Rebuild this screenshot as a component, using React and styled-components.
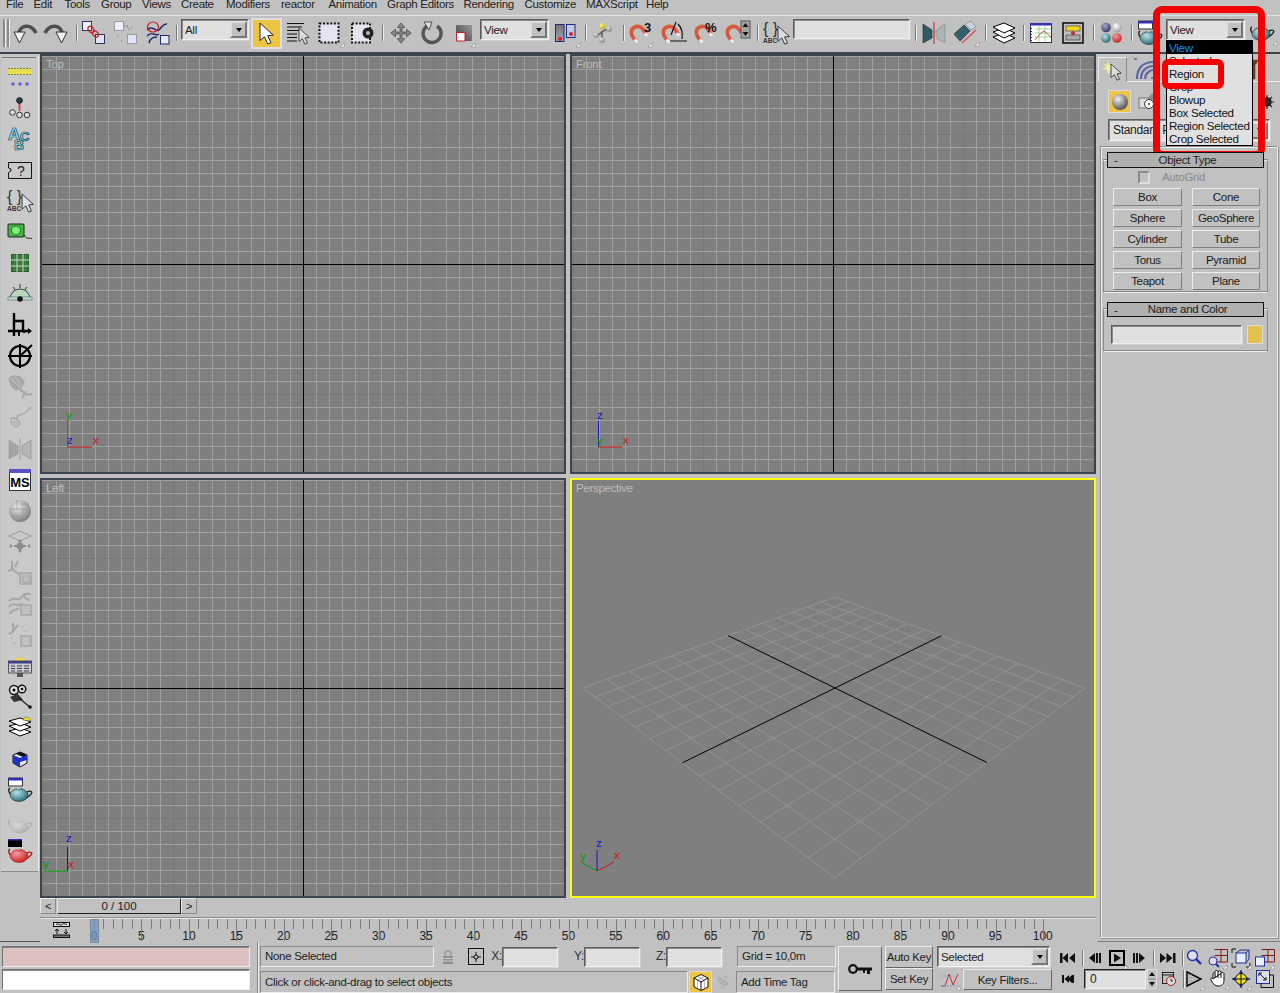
import React from 'react';
import styled, { createGlobalStyle, css } from 'styled-components';

const Global = createGlobalStyle`
  html, body { margin: 0; padding: 0; background: #c1c1c1; overflow: hidden; }
  * { box-sizing: border-box; }
`;
const FONT = `"Liberation Sans", Arial, sans-serif`;
const sunken = css`
  background: #e0e0e0;
  border: 1px solid;
  border-color: #5c5c5c #f0f0f0 #f0f0f0 #5c5c5c;
  box-shadow: inset 1px 1px 0 #8a8a8a, 1px 1px 0 #d0d0d0;
`;
const raised = css`
  background: #c1c1c1;
  border: 1px solid;
  border-color: #ececec #808080 #808080 #ececec;
`;

const Root = styled.div`
  position: relative; width: 1280px; height: 993px; overflow: hidden;
  background: #c1c1c1; font: 11.5px/13px ${FONT}; letter-spacing: -.3px; color: #1c1c1c;
`;
const Menu = styled.nav`
  display: flex; height: 15px; overflow: hidden; padding-left: 6px; line-height: 9px; color: #222;
  font-size: 11.5px;
`;
const MenuItem = styled.span`flex: none; width: ${p => p.$w}px;`;
const Toolbar = styled.div`
  display: flex; align-items: center; height: 39px; padding-bottom: 2px;
  border-top: 1px solid #e2e2e2; border-bottom: 2px solid #3c4450;
`;
const Grip = styled.div`
  flex: none; width: 10px; height: 28px; display: flex; gap: 1px; padding-left: 3px;
  &::before, &::after { content: ''; width: 2px; background: #8c8c8c; border-right: 1px solid #eee; }
`;
const Slot = styled.div`
  flex: none; width: ${p => p.$w}px; display: flex; align-items: center; justify-content: center;
  margin-left: ${p => p.$ml || 0}px;
`;
const Sep = styled.div`
  flex: none; width: ${p => p.$w}px; display: flex; justify-content: center;
  &::before { content: ''; width: 1px; height: ${p => p.$h || 16}px; background: #777; box-shadow: 1px 0 0 #eee; }
`;
const Glyph = styled.svg`display: block; flex: none; overflow: visible; letter-spacing: 0;`;
const Combo = styled.div`
  ${sunken}; flex: none; width: ${p => p.$w}px; height: ${p => p.$h || 21}px; margin-left: ${p => p.$ml || 0}px;
  display: flex; align-items: center; justify-content: space-between; padding: 0 1px 0 3px;
  font-size: 11.5px; white-space: nowrap; overflow: hidden;
  & > span:first-child { padding-top: 1px; }
`;
const ToolCombo = styled(Combo)`align-self: flex-start; margin-top: 3px;`;
const ComboBtn = styled.span`
  ${raised}; flex: none; width: 17px; height: 17px; display: flex; align-items: center; justify-content: center;
  border-width: 2px; border-color: #ddd #777 #777 #ddd;
  &::after { content: ''; border: 3.5px solid transparent; border-top: 4px solid #000; border-bottom: 0; }
`;
const SelectBtn = styled.div`
  flex: none; width: 31px; height: 31px; margin-left: 2px; display: flex; align-items: center; justify-content: center;
  background: #eec445; border: 2px solid #dedede;
`;
const BlankInput = styled.div`${sunken}; flex: none; align-self: flex-start; width: 117px; height: 20px; margin: 3px -1px 0 3px;`;

const Work = styled.div`display: flex; height: 888px;`;
const LeftCol = styled.aside`flex: none; width: 40px; height: 100%; border-bottom: 1px solid #555; padding-top: 2px;`;
const Side = styled.div`
  width: 38px; height: 816px; margin-left: 1px; background: #c9c9c9; border-right: 1px solid #eee;
  border-bottom: 1px solid #8a8a8a; padding-top: 8px; display: flex; flex-direction: column;
  position: relative;
  &::before { content: ''; position: absolute; left: 1px; right: 2px; top: 1px; height: 1px; background: #777; }
`;
const SideSlot = styled.div`flex: none; height: ${p => p.$h}px; display: flex; align-items: center; justify-content: center;`;
const Center = styled.main`flex: none; width: 1058px;`;
const Views = styled.div`display: grid; grid-template-columns: 526px 526px; grid-template-rows: 420px 420px; gap: 4px; height: 844px;`;
const View = styled.section`
  position: relative; background: #7f7f7f; border: 2px solid ${p => p.$active ? '#ffff00' : '#3c4450'};
  overflow: hidden;
`;
const ViewLabel = styled.span`position: absolute; left: 4px; top: 2px; color: #bcbcbc; font-size: 11.5px;`;
const Slider = styled.div`display: flex; height: 19px; width: 156px; align-items: flex-start;`;
const SliderBtn = styled.div`
  ${raised}; flex: none; width: 16px; height: 16px; display: flex; align-items: center; justify-content: center;
  font-size: 11px; border-color: #e8e8e8 #8a8a8a #8a8a8a #e8e8e8;
`;
const SliderThumb = styled.div`
  flex: none; width: 124px; height: 16px; margin-left: 1px; text-align: center; font-size: 11.5px; line-height: 15px; letter-spacing: 0;
  border: 1px solid; border-color: #e8e8e8 #222 #222 #e8e8e8;
`;
const Ruler = styled.div`
  position: relative; height: 25px; display: flex; align-items: flex-end; border-top: 1px solid #8c8c8c;
  box-shadow: inset 0 1px 0 #e6e6e6; width: 1056px;
`;
const RulerIcon = styled.div`flex: none; margin: 0 0 4px 13px; width: 17px; align-self: flex-end; height: 16px;`;
const RulerLabels = styled.div`display: flex; margin: 0 0 -1px .3px;`;
const RulerLabel = styled.span`flex: none; width: 47.45px; text-align: center; font-size: 12px; line-height: 14px; letter-spacing: 0; color: #222;`;
const Ticks = styled.svg`position: absolute; left: 0; top: 0; overflow: visible;`;

const Panel = styled.aside`flex: none; width: 182px; height: 888px; display: flex; flex-direction: column; border-bottom: 1px solid #7c7c7c;`;
const Tabs = styled.div`display: flex; height: 28px; padding-top: 3px; border-bottom: 1px solid #eee;`;
const Tab = styled.div`
  flex: none; width: ${p => p.$w}px; height: ${p => p.$active ? 25 : 24}px; display: flex; align-items: center; justify-content: center;
  margin-left: ${p => p.$ml || 0}px;
  ${p => p.$active && css`border: 1px solid; border-color: #eee #8a8a8a #c1c1c1 #eee;`}
`;
const SubTabs = styled.div`display: flex; align-items: center; height: 23px; margin: 8px 0 0 10px;`;
const SubActive = styled.div`flex: none; width: 23px; height: 23px; background: #eec445; border: 1px solid #ddd; display: flex; align-items: center; justify-content: center;`;
const SubEnd = styled.div`margin-left: auto; margin-right: 6px;`;
const PanelCombo = styled(Combo)`margin: 6px 0 0 10px; padding-left: 4px; font-size: 12px;`;
const Frame = styled.div`
  flex: none; margin: 5px 2px 4px 2px; height: 792px; border: 1px solid; border-color: #8e8e8e #ececec #ececec #8e8e8e;
  box-shadow: 1px 1px 0 #8e8e8e, inset 1px 1px 0 #eee; padding: 5px 0 0 2px;
`;
const Rollout = styled.div`width: 165px; margin-bottom: 9px;`;
const RollHead = styled.div`
  position: relative; z-index: 1; margin: 0 4px; height: ${p => p.$h}px; background: #b0b0b0; border: 1px solid #111;
  display: flex; align-items: center; justify-content: center; font-size: 11.5px; padding-left: 4px;
  & > i { position: absolute; left: 6px; top: 1px; font-style: normal; }
`;
const RollBody = styled.div`
  margin-top: -8px; border: 1px solid; border-color: #eee #888 #eee #888; box-shadow: inset 0 -1px 0 #888, 0 -1px 0 #888; padding: ${p => p.$pt}px 5px 0 9px;
  height: ${p => p.$h}px;
`;
const AutoGridRow = styled.div`display: flex; align-items: center; height: 13px; margin-left: 25px; color: #8a8a8a; font-size: 11.5px; gap: 12px;`;
const Check = styled.span`flex: none; width: 12px; height: 13px; border: 2px solid; border-color: #8a8a8a #ddd #ddd #8a8a8a; background: #c1c1c1;`;
const PrimGrid = styled.div`display: grid; grid-template-columns: 69px 68px; column-gap: 10px; row-gap: 3px; margin-top: 4px;`;
const PrimBtn = styled.div`
  height: 18px; border: 1px solid; border-color: #ececec #808080 #808080 #ececec; font-size: 11.5px;
  display: flex; align-items: center; justify-content: center; white-space: nowrap; color: #1a1a1a;
`;
const NameRow = styled.div`display: flex; gap: 5px; margin-left: -2px;`;
const NameInput = styled.div`${sunken}; flex: none; width: 131px; height: 19px;`;
const Swatch = styled.div`flex: none; width: 16px; height: 19px; background: #e3c050; border: 1px solid #ddd;`;

const Status = styled.footer`display: flex; height: 51px;`;
const Prompt = styled.div`flex: none; width: 248px; margin: 4px 0 0 2px; display: flex; flex-direction: column; gap: 2px;`;
const PromptBox = styled.div`
  height: 21px; background: ${p => p.$c}; border: 1px solid; border-color: #707070 #eee #eee #707070; box-shadow: inset 0 1px 0 #888;
`;
const Divider = styled.div`flex: none; width: 1px; margin-left: 7px; margin-right: 2px; background: #888; box-shadow: 1px 0 0 #eee;`;
const StatusMid = styled.div`flex: none; width: 576px; margin-left: 0; padding-top: 4px; display: flex; flex-direction: column; gap: 4px;`;
const StatusRow = styled.div`display: flex; height: ${p => p.$h}px; align-items: center;`;
const TextBox = styled.div`
  flex: none; width: ${p => p.$w}px; height: 100%; padding-left: 4px; display: flex; align-items: center; margin-left: ${p => p.$ml || 0}px;
  border: 1px solid; border-color: #8a8a8a #eee #eee #8a8a8a; font-size: 11.5px; color: #222; white-space: nowrap;
`;
const AxisLabel = styled.span`flex: none; width: ${p => p.$w}px; text-align: right; font-size: 12px; color: #333;`;
const CoordInput = styled.div`${sunken}; flex: none; width: 56px; height: 20px;`;
const AbsBtn = styled.div`flex: none; width: 16px; height: 17px; margin-left: 6px; border: 1px solid #111; display: flex; align-items: center; justify-content: center;`;
const CubeBtn = styled.div`flex: none; width: 23px; height: 22px; margin-left: 1px; background: #eec445; border: 1px solid #ddd; display: flex; align-items: center; justify-content: center;`;
const KeyBtn = styled.div`${raised}; flex: none; width: 44px; height: 45px; margin: 4px 0 0 2px; display: flex; align-items: center; justify-content: center; border-color: #ececec #666 #666 #ececec;`;
const KeyCol = styled.div`flex: none; width: 48px; margin: 4px 0 0 3px; display: flex; flex-direction: column;`;
const KeyCell = styled.div`${raised}; height: 22px; display: flex; align-items: center; justify-content: center; font-size: 11.5px; white-space: nowrap; border-color: #ececec #666 #666 #ececec;`;
const SetCol = styled.div`flex: none; width: 115px; margin: 4px 0 0 4px; display: flex; flex-direction: column; gap: 2px;`;
const SetRow = styled.div`display: flex; height: 21px; align-items: center;`;
const KeyFilters = styled.div`${raised}; flex: none; width: 89px; height: 21px; padding-top: 1px; display: flex; align-items: center; justify-content: center; font-size: 11.5px; border-color: #ececec #666 #666 #ececec;`;
const Play = styled.div`flex: none; padding-top: 5px; display: flex; flex-direction: column; margin-left: 4px;`;
const PlayRow = styled.div`display: flex; align-items: center; height: 21px;`;
const FrameInput = styled.div`${sunken}; flex: none; width: 62px; height: 20px; padding-left: 5px; font-size: 12px; line-height: 18px; border-color: #222 #eee #eee #222;`;
const Spin = styled.div`flex: none; width: 10px; height: 20px; margin-left: 1px;`;

const ListMenu = styled.ul`
  position: absolute; left: 1166px; top: 40px; width: 87px; height: 106px; margin: 0; padding: 0; list-style: none;
  background: #e0e0e0; border: 1px solid #000; font-size: 11.6px; line-height: 13px; color: #111; white-space: nowrap;
`;
const ListItem = styled.li`
  height: 13px; padding-left: 2px; line-height: 13px;
  ${p => p.$on && css`background: #000; color: #0a9cf5;`}
`;
const HeavyFrame = styled.div`
  position: absolute; left: 1153px; top: 6px; width: 112px; height: 152px; border: 7px solid #f40000; border-radius: 9px;
`;
const LightFrame = styled.div`
  position: absolute; left: 1162px; top: 59px; width: 62px; height: 30px; border: 6px solid #f40000; border-radius: 6px;
`;
const ZeroDefs = styled.svg`display: block; width: 0; height: 0;`;

/* drawing helpers */
const I = ({ w = 24, h = 24, children }) => <Glyph width={w} height={h} viewBox={`0 0 ${w} ${h}`}>{children}</Glyph>;
const Fly = ({ x, y }) => <path d={`M${x} ${y}h4v-4z`} fill="#fff" stroke="#555" strokeWidth=".4" />;
const Arrow = ({ x = 0, y = 0, s = 1, fill = '#fff', stroke = '#222' }) => (
  <path transform={`translate(${x} ${y}) scale(${s})`} d="M0 0V16L4 12.5 7 19 10 18 7 11.5 12 11Z" fill={fill} stroke={stroke} strokeWidth=".9" />
);
const Ball = ({ x, y, r, g = 'bGray' }) => <circle cx={x} cy={y} r={r} fill={`url(#${g})`} />;
const Magnet = ({ x = 0, y = 0 }) => (
  <g transform={`translate(${x} ${y})`}>
    <path d="M7 17C1 11 1 5 6 3S14 4 17 10" fill="none" stroke="#d9593b" strokeWidth="3.8" />
    <path d="M5.500 15.500L8.500 18.500M15.500 9.500L18.500 11.500" stroke="#eee" strokeWidth="3" />
  </g>
);
const Pot = ({ g = 'bTeal', x = 0, y = 0, gray, line = '#222' }) => (
  <g transform={`translate(${x} ${y})`}>
    <path d="M4 8C0 6 0 2 2 1M19 5C23 3 25 5 23 7 22 9 20 10 18 11" fill="none" stroke={gray ? '#b0b0b0' : line} strokeWidth="1.4" />
    <ellipse cx="11" cy="8" rx="9" ry="6.5" fill={`url(#${g})`} stroke={gray ? 'none' : line} strokeWidth=".6" />
    <ellipse cx="11" cy="2" rx="2.5" ry="1.3" fill={`url(#${g})`} />
  </g>
);
const Undo = ({ flip }) => (
  <I w={24} h={22}><g transform={flip ? 'translate(24 0) scale(-1 1)' : undefined}>
    <path d="M6 11C7 3 18 1 23 11" fill="none" stroke="#4c4c4c" strokeWidth="3.6" />
    <path d="M1 10H12L6.5 21Z" fill="#f2f2f2" stroke="#333" />
  </g></I>
);
const Link = ({ gray }) => {
  const a = gray ? '#9a9a9a' : '#2b3560', r = gray ? '#b86060' : '#d02020';
  return <I w={24} h={24}>
    <rect x=".5" y=".5" width="9" height="9" fill="#eef" stroke={a} />
    <rect x="13.5" y="13.5" width="9" height="9" fill="#dfe4f2" stroke={a} />
    {gray ? <path d="M10 5c4 0 5 2 5 5M3 14l1 1M7 19l1 1M13 4l1 1M17 7l1 0" stroke={r} fill="none" strokeDasharray="1.4 1.4" />
      : <g fill="none" stroke={r} strokeWidth="1.3"><ellipse cx="9" cy="8.5" rx="2.5" ry="3.5" transform="rotate(-40 9 8.5)" /><ellipse cx="13.5" cy="13" rx="2.5" ry="3.5" transform="rotate(-40 13.5 13)" /></g>}
  </I>;
};
const Bind = ({ gray }) => {
  const c = gray ? '#9c9c9c' : '#1c2a70';
  return <I w={24} h={24}>
    <path d="M1 9C7 3 10 12 13 9S17 2 21 3M1 15C6 9 9 16 13 13M3 22c1-5 5-6 8-6" fill="none" stroke={c} strokeWidth="1.5" />
    <ellipse cx="7" cy="6" rx="5.5" ry="5" fill="none" stroke={gray ? '#aaa' : '#d02020'} strokeWidth="1.2" />
    <rect x="14.5" y="14.5" width="8.5" height="8.5" fill="#e4e8f4" stroke={c} />
  </I>;
};
const Mirror = ({ gray }) => <I w={22} h={22}>
  <path d="M0 2L9 8V16L0 21Z" fill={gray ? '#a4a4a4' : '#2f5a68'} stroke={gray ? '#999' : '#222'} strokeWidth=".6" />
  <path d="M22 2L13 8V16L22 21Z" fill={gray ? '#b6b6b6' : '#a8b4b8'} stroke="#888" strokeWidth=".6" />
  <path d="M11 0V22" stroke={gray ? '#aaa' : '#c84848'} strokeWidth="1.4" />
</I>;
const Layers = () => <I w={22} h={22}>
  {[13, 8, 3].map(y => <path key={y} d={`M0 ${y + 2}L11 ${y - 2}L22 ${y + 3}L11 ${y + 8}Z`} fill="#fff" stroke="#000" />)}
</I>;
const NamedSel = () => <I w={26} h={24}>
  <text x="0" y="13" fontFamily={FONT} fontSize="16" fill="#333">{'{ }'}</text>
  <text x="0" y="22" fontFamily={FONT} fontSize="6.5" fontWeight="700" fill="#333">ABC</text>
  <Arrow x={15} y={5} s={.95} fill="#ddd" />
</I>;

const ToolRow = () => <>
  <Grip />
  <Slot $w={30}><Undo /></Slot>
  <Slot $w={32}><Undo flip /></Slot>
  <Sep $w={8} />
  <Slot $w={28}><Link /></Slot>
  <Slot $w={36}><Link gray /></Slot>
  <Slot $w={28}><Bind /></Slot>
  <Sep $w={9} />
  <ToolCombo $w={68}><span>All</span><ComboBtn /></ToolCombo>
  <SelectBtn><I w={14} h={22}><Arrow y={1} s={1.1} fill="#fff" /></I></SelectBtn>
  <Slot $w={31}><I w={22} h={22}>
    <path d="M0 1.5H17M0 5H15M0 8.5H13M0 12H10M0 15.5H10M0 19H10" stroke="#111" strokeWidth="1.2" />
    <Arrow x={12} y={6} s={.85} fill="#ddd" />
  </I></Slot>
  <Slot $w={34}><I w={24} h={22}>
    <rect x="1.5" y="1.5" width="19" height="19" fill="#e4e4f0" stroke="#111" strokeWidth="2" strokeDasharray="2 1.6" />
    <Fly x={22} y={25} />
  </I></Slot>
  <Slot $w={31}><I w={24} h={22}>
    <rect x="1" y="1.5" width="18" height="19" fill="#e4e4f0" stroke="#111" strokeWidth="2" strokeDasharray="2 1.6" />
    <circle cx="17" cy="11" r="5.5" fill="#222" /><circle cx="17" cy="11" r="2" fill="#bbb" />
  </I></Slot>
  <Sep $w={8} />
  <Slot $w={29}><I w={22} h={22}><path transform="scale(.92)" d="M12 1l4 5h-3v5h5V8l5 4-5 4v-3h-5v5h3l-4 5-4-5h3v-5H6v3l-5-4 5-4v3h5V6H8z" fill="#8a8a8a" stroke="#444" strokeWidth=".8" /></I></Slot>
  <Slot $w={34}><I w={22} h={22}>
    <path d="M16 4A9 9 0 1 1 7 3.500" fill="none" stroke="#555" strokeWidth="3.4" />
    <path d="M3 0L11 0 8 8Z" fill="#ddd" stroke="#333" strokeWidth=".8" />
  </I></Slot>
  <Slot $w={29}><I w={20} h={20}>
    <rect x="2" y="2" width="16" height="16" fill="url(#gDark)" />
    <rect x="2.500" y="9.500" width="8.500" height="8.500" fill="#fff" stroke="#c82020" />
    <Fly x={17} y={24} />
  </I></Slot>
  <ToolCombo $w={69} $ml={2}><span>View</span><ComboBtn /></ToolCombo>
  <Slot $w={34}><I w={22} h={22}>
    <rect x=".5" y="2.500" width="8.500" height="17" fill="url(#gSlate)" stroke="#1c2a80" />
    <rect x="11.500" y="2.500" width="8.500" height="13" fill="#c4c8dc" stroke="#1c2a80" />
    <circle cx="5" cy="17" r="2" fill="#e02020" /><circle cx="16" cy="12" r="2" fill="#e02020" />
    <Fly x={21} y={25} />
  </I></Slot>
  <Sep $w={5} />
  <Slot $w={30}><I w={20} h={20}>
    <path d="M4 13L10 8 16 5M9 8L9 18" stroke="#555" strokeWidth="1.4" fill="none" />
    <Ball x={9} y={3} r={3} g="bYellow" /><Ball x={16} y={6} r={2.800} /><Ball x={3} y={12} r={2.800} /><Ball x={9} y={17} r={2.800} />
  </I></Slot>
  <Sep $w={10} />
  <Slot $w={26}><I w={24} h={24}><Magnet y={3} />
    <text x="15" y="11" fontFamily={FONT} fontSize="13" fontWeight="700" fill="#111">3</text><Fly x={19} y={26} /></I></Slot>
  <Slot $w={40}><I w={26} h={24}><Magnet y={3} />
    <path d="M15 1L10 14M9 20H26M17 3C21 7 22 12 21 18" stroke="#111" fill="none" strokeWidth="1.2" /></I></Slot>
  <Slot $w={24}><I w={24} h={24}><Magnet y={3} />
    <text x="11" y="11" fontFamily={FONT} fontSize="13" fontWeight="700" fill="#111">%</text></I></Slot>
  <Slot $w={28} $ml={6}><I w={24} h={24}><Magnet y={3} x={-1} />
    <rect x="15" y="0" width="9" height="17" fill="#a4a4a4" stroke="#555" />
    <path d="M19.500 2l3 4h-6zM19.500 15l3-4h-6z" fill="#111" /></I></Slot>
  <Sep $w={10} />
  <Slot $w={28}><NamedSel /></Slot>
  <BlankInput />
  <Sep $w={12} />
  <Slot $w={26}><Mirror /></Slot>
  <Slot $w={36}><I w={24} h={24}>
    <path d="M1 13L11 4 17 10 7 20Z" fill="#34606c" stroke="#222" strokeWidth=".6" />
    <path d="M12 3L18 0 23 6 18 9Z" fill="#c8d4dc" stroke="#777" strokeWidth=".6" />
    <path d="M9 22L23 9" stroke="#d85050" strokeWidth="1.4" />
    <Fly x={22} y={25} />
  </I></Slot>
  <Sep $w={5} />
  <Slot $w={32}><Layers /></Slot>
  <Sep $w={6} />
  <Slot $w={30}><I w={22} h={20}>
    <rect x=".5" y=".5" width="21" height="19" fill="#fff" stroke="#333" />
    <rect x="0" y="0" width="22" height="2.500" fill="#3434b4" />
    <path d="M5 6H21M5 10H21M5 14H21M9 3V19M15 3V19" stroke="#8c8" strokeWidth=".8" />
    <path d="M1 5v1M1 8v1M1 11v1M1 14v1M1 17v1" stroke="#22a" strokeWidth="2" />
    <path d="M5 17L10 11 14 8 21 14" fill="none" stroke="#d05050" />
  </I></Slot>
  <Slot $w={34}><I w={22} h={22}>
    <rect x="1" y="1" width="20" height="20" fill="none" stroke="#111" strokeWidth="1.6" />
    <rect x="4" y="4" width="14" height="5" fill="#f4d820" stroke="#333" strokeWidth=".6" />
    <rect x="4" y="13" width="14" height="5" fill="#aaa" stroke="#333" strokeWidth=".6" />
    <path d="M11 9v3M9 10.500l2 2 2-2" stroke="#c02020" fill="none" strokeWidth="1.4" />
  </I></Slot>
  <Sep $w={6} />
  <Slot $w={32}><I w={22} h={22}>
    <Ball x={5} y={5.500} r={4.800} g="bNavy" /><Ball x={16} y={5.500} r={4.800} g="bWhite" />
    <Ball x={5} y={16} r={4.800} g="bTeal" /><Ball x={16} y={16} r={4.800} g="bRed" />
  </I></Slot>
  <Sep $w={7} />
  <Slot $w={30}><I w={24} h={24}>
    <rect x="0.500" y="0" width="14" height="8" fill="#fff" stroke="#333" /><rect x="0" y="0" width="15" height="2.500" fill="#3030b0" />
    <Pot y={9} />
  </I></Slot>
  <ToolCombo $w={79} $ml={1}><span>View</span><ComboBtn /></ToolCombo>
  <Slot $w={34}><I w={24} h={18}><Pot y={2} /><Fly x={23} y={21} /></I></Slot>
</>;

const ruled = (n, f) => Array.from({ length: n }, (_, i) => f(i));
const Tripod = ({ kind }) => {
  const B = '#1414c8', G = '#00a000', R = '#d01414';
  const T = (x, y, c, t) => <text x={x} y={y} fill={c} fontFamily={FONT} fontSize="11.5">{t}</text>;
  if (kind === 'top') return <g strokeWidth="1">
    <path d="M25.500 391V365" stroke={G} /><path d="M25.500 391H50" stroke={R} />
    {T(24, 363, G, 'y')}{T(25, 388, B, 'z')}{T(51, 388, R, 'x')}</g>;
  if (kind === 'front') return <g strokeWidth="1">
    <path d="M26.500 391V365" stroke={B} /><path d="M26.500 391H50" stroke={R} />
    {T(25, 363, B, 'z')}{T(25, 388, G, 'y')}{T(51, 388, R, 'x')}</g>;
  if (kind === 'left') return <g strokeWidth="1">
    <path d="M25.500 391V367" stroke={B} /><path d="M25.500 391H2" stroke={G} />
    {T(24, 362, B, 'z')}{T(1, 388, G, 'y')}{T(26, 388, R, 'x')}</g>;
  return <g strokeWidth="1">
    <path d="M25 391V370" stroke={B} /><path d="M25 391L10 383" stroke={G} /><path d="M25 391L42 382" stroke={R} />
    {T(24, 367, B, 'z')}{T(8, 380, G, 'y')}{T(42, 379, R, 'x')}</g>;
};
const FlatGrid = () => <>
  {ruled(41, i => <path key={'v' + i} d={`M${1.5 + 13 * i} 0V416`} stroke={(i % 10 === 0) ? '#777' : '#9f9f9f'} />)}
  {ruled(33, i => <path key={'h' + i} d={`M0 ${.5 + 13 * i}H522`} stroke={(i % 10 === 6) ? '#777' : '#9f9f9f'} />)}
  <path d="M261.500 0V416M0 208.500H522" stroke="#000" />
</>;

const homography = () => {
  const q = [[263, 117], [513, 208], [263, 398], [11, 208]];
  const [[x0, y0], [x1, y1], [x2, y2], [x3, y3]] = q;
  const dx1 = x1 - x2, dx2 = x3 - x2, sx = x0 - x1 + x2 - x3;
  const dy1 = y1 - y2, dy2 = y3 - y2, sy = y0 - y1 + y2 - y3;
  const den = dx1 * dy2 - dx2 * dy1;
  const g = (sx * dy2 - dx2 * sy) / den, h = (dx1 * sy - sx * dy1) / den;
  const a = x1 - x0 + g * x1, b = x3 - x0 + h * x3, d = y1 - y0 + g * y1, e = y3 - y0 + h * y3;
  return (u, v) => {
    const w = g * u + h * v + 1;
    return [((a * u + b * v + x0) / w).toFixed(1), ((d * u + e * v + y0) / w).toFixed(1)];
  };
};
const PerspGrid = () => {
  const P = homography();
  const N = 14;
  const line = (a, b) => `M${a[0]} ${a[1]}L${b[0]} ${b[1]}`;
  return <>
    {ruled(N + 1, i => i === N / 2 ? null : <path key={'u' + i} d={line(P(i / N, 0), P(i / N, 1))} stroke="#939393" />)}
    {ruled(N + 1, i => i === N / 2 ? null : <path key={'w' + i} d={line(P(0, i / N), P(1, i / N))} stroke="#939393" />)}
    <path d={line(P(.5, 0), P(.5, 1))} stroke="#000" />
    <path d={line(P(0, .5), P(1, .5))} stroke="#000" />
  </>;
};
const Viewport = ({ label, kind, active }) => (
  <View $active={active}>
    <Glyph width="522" height="416" viewBox="0 0 522 416">
      {active ? <PerspGrid /> : <FlatGrid />}
      <Tripod kind={kind} />
    </Glyph>
    <ViewLabel>{label}</ViewLabel>
  </View>
);

const G = '#a6a6a6';
const sideItems = [
  [14, <I w={24} h={9}><rect y="1" width="24" height="7" fill="#e8e050" /><path d="M0 1.500h24M0 7.500h24" stroke="#777" strokeDasharray="2 1" /></I>],
  [12, <I w={20} h={6}>{[3, 10, 17].map(x => <circle key={x} cx={x} cy="3" r="2" fill="#5a5ac8" stroke="#ccd" strokeWidth=".6" />)}</I>],
  [36, <I w={22} h={22}>
    <path d="M10.500 5V14" stroke="#d04848" strokeWidth="2" />
    <circle cx="10.500" cy="3.500" r="2.800" fill="#18484c" stroke="#111" />
    <circle cx="3.500" cy="15.500" r="2.800" fill="#ddd" stroke="#333" /><circle cx="10.500" cy="18" r="2.800" fill="#ddd" stroke="#333" /><circle cx="18" cy="18" r="2.800" fill="#ddd" stroke="#333" />
  </I>],
  [24, <I w={24} h={24}>
    <g fontFamily={FONT} fontWeight="700" fill="#8fe0f4" stroke="#0c3c60" strokeWidth=".7">
      <text x="0" y="14" fontSize="17">A</text><text x="12" y="15" fontSize="13">C</text><text x="6" y="24" fontSize="14">B</text></g>
  </I>],
  [40, <I w={24} h={17}>
    <path d="M.5.5H23.500V16.500H.5V10.500L3 9 3 7 .5 6Z" fill="none" stroke="#111" />
    <text x="9" y="14" fontFamily={FONT} fontSize="14" fill="#222">?</text>
  </I>],
  [22, <NamedSel />],
  [40, <I w={24} h={16}>
    <rect y="0" width="16" height="13" rx="1" fill="#46b446" stroke="#222" />
    <circle cx="8" cy="6.500" r="4.500" fill="#7cf07c" stroke="#187018" />
    <path d="M16 11c2 4 4 3 8 3.500" fill="none" stroke="#222" />
  </I>],
  [22, <I w={18} h={18}>
    <rect x=".5" y=".5" width="17" height="17" fill="#3c7c3c" stroke="#2c5c2c" />
    <path d="M6 0V18M12 0V18M0 6H18M0 12H18" stroke="#c8d8c8" />
  </I>],
  [38, <I w={24} h={18}>
    <path d="M2 15A10 10 0 0 1 22 15Z" fill="#bcd8bc" stroke="#345" />
    <path d="M12 0V4M5 3L7 6M19 3L17 6" stroke="#333" />
    <rect x="0" y="13" width="24" height="3" fill="#c8e0c8" stroke="#467" strokeWidth=".6" />
    <circle cx="12" cy="15" r="2.800" fill="#111" />
  </I>],
  [26, <I w={24} h={24}>
    <path d="M6 0V23M0 18H21M6 8H15V17" fill="none" stroke="#000" strokeWidth="2.400" />
    <path d="M20 15L24 18 20 21Z" fill="#000" />
    <path d="M11 18v5M16 18v2" stroke="#000" strokeWidth="2" />
  </I>],
  [36, <I w={24} h={24}>
    <circle cx="12" cy="12" r="10" fill="none" stroke="#000" strokeWidth="2.200" />
    <path d="M12 0V24M0 12H24M12 12L24 1" stroke="#000" strokeWidth="2" />
  </I>],
  [26, <I w={24} h={24}>
    <path d="M1 3C5-1 14 1 16 6 16 12 11 15 8 15 3 13 1 7 1 3Z" fill={G} stroke="#aaa" />
    <path d="M3 3L12 13M7 2L14 11" stroke="#c9c9c9" />
    <path d="M12 14L18 20M18 16L14 23M18 20L24 19" stroke={G} strokeWidth="1.800" />
  </I>],
  [34, <I w={22} h={22}>
    <path d="M2 14C2 20 8 22 10 19S8 12 5 12 2 13 2 14ZM8 12C8 7 14 11 18 5 20 3 22 2 22 1" fill="none" stroke={G} strokeWidth="1.300" />
    <circle cx="6" cy="17" r="3" fill="#bbb" />
  </I>],
  [30, <Mirror gray />],
  [32, <I w={22} h={22}>
    <rect x=".5" y=".5" width="21" height="21" fill="#fff" stroke="#333" />
    <rect x="0" y="0" width="22" height="4" fill="#5a50c8" />
    <text x="11" y="18" textAnchor="middle" fontFamily={FONT} fontWeight="700" fontSize="13" fill="#000">MS</text>
  </I>],
  [30, <I w={22} h={22}><Ball x={11} y={11} r={11} /><path d="M1 9H21M3 16H19M11 4H20M8 0V9M14 9V16" stroke="#999" strokeWidth=".8" /></I>],
  [32, <I w={24} h={22}>
    <path d="M1 5L12 0 23 5 12 10Z" fill="none" stroke="#999" />
    <path d="M2 13l3 2-3 2zM22 13l-3 2 3 2zM12 8l2 3h-4zM12 22l-2-3h4z" fill="#8c8c8c" />
    <circle cx="12" cy="15" r="3.500" fill="#8c8c8c" /><path d="M6 15h12M12 10v10" stroke="#8c8c8c" strokeWidth="2" />
  </I>],
  [30, <I w={24} h={24}>
    <rect x="12" y="12" width="11" height="11" fill="#c0c0c0" stroke={G} strokeWidth="1.500" /><rect x="15" y="15" width="6" height="6" fill="none" stroke={G} />
    <path d="M4 0V8L12 14M10 0L7 6M0 10L6 8" stroke={G} strokeWidth="2" fill="none" />
  </I>],
  [32, <I w={24} h={24}>
    <path d="M1 9C7 3 10 10 13 6S17 1 23 2M1 15C6 8 10 17 14 11M2 22C3 17 8 19 11 16M16 1C15 6 19 8 22 8" fill="none" stroke={G} strokeWidth="2" />
    <rect x="13" y="13" width="10" height="10" fill="#c0c0c0" stroke={G} strokeWidth="1.500" />
  </I>],
  [30, <I w={24} h={24}>
    <path d="M5 0V9L1 11M10 2L5 8M14 4h1M17 8h1M3 15h1M6 20h1" stroke={G} strokeWidth="2" fill="none" />
    <rect x="13" y="13" width="10" height="10" fill="#c0c0c0" stroke={G} strokeWidth="1.500" />
  </I>],
  [34, <I w={24} h={20}>
    <path d="M5 5C6-1 18-1 19 5Z" fill="#eed858" />
    <rect x=".5" y="4" width="23" height="12" fill="#c8c8d4" stroke="#555" /><rect x="0" y="4" width="24" height="2.500" fill="#40408c" />
    <path d="M3 9h4M3 11.500h4M3 14h4M9 9h5M9 11.500h5M9 14h5M16 9h5M16 11.500h5M16 14h5" stroke="#444" />
    <rect x="9" y="16" width="6" height="4" fill="#555" />
  </I>],
  [26, <I w={24} h={24}>
    <circle cx="6" cy="5" r="4.500" fill="#ddd" stroke="#111" strokeWidth="1.400" /><circle cx="14" cy="4" r="3.800" fill="#ddd" stroke="#111" strokeWidth="1.400" />
    <circle cx="6" cy="5" r="1.500" fill="#111" /><circle cx="14" cy="4" r="1.300" fill="#111" />
    <path d="M2 12L10 9 15 15 6 17Z" fill="#333" /><path d="M11 13L23 23" stroke="#222" strokeWidth="1.300" /><circle cx="22" cy="22" r="1.800" fill="#111" />
  </I>],
  [34, <I w={22} h={21}>
    {[12, 7, 2].map(y => <path key={y} d={`M0 ${y + 2}L11 ${y - 1}L22 ${y + 3}L11 ${y + 7}Z`} fill="#fff" stroke="#000" />)}
    <path d="M14 3C15-1 21-1 22 4Z" fill="#f4e020" stroke="#553" strokeWidth=".5" />
  </I>],
  [30, <I w={15} h={15}>
    <path d="M1 3L8 0 15 3V11L8 15 1 11Z" fill="#e8e8f0" stroke="#111" />
    <path d="M1 3L8 6V15L1 11ZM8 6L15 3V8L8 10Z" fill="#2230d0" />
    <path d="M8 0L15 3 11 5 4 2Z" fill="#111" />
  </I>],
  [32, <I w={24} h={24}>
    <rect x=".5" y="0" width="14" height="8" fill="#fff" stroke="#333" /><rect x="0" y="0" width="15" height="2.500" fill="#3030b0" />
    <Pot y={9} />
  </I>],
  [40, <I w={24} h={16}><Pot y={1} g="bPale" gray /></I>],
  [10, <I w={24} h={24}>
    <rect x="0" y="0" width="14" height="8" fill="#000" /><rect x="0" y="0" width="14" height="1.500" fill="#3030b0" />
    <Pot y={9} g="bRed" line="#b01818" />
  </I>],
];

const Pb = ({ d, w = 18, h = 12 }) => <I w={w} h={h}><path d={d} fill="#111" /></I>;
const Sat = () => <I w={14} h={16}>
  <path d="M2 2C1 9 8 13 13 10Z" fill="#b4b4b4" stroke="#aaa" /><path d="M6 11L3 15H10Z" fill="#b8b8b8" /><circle cx="10" cy="3" r="1.500" fill="#aaa" />
</I>;

const primitives = ['Box', 'Cone', 'Sphere', 'GeoSphere', 'Cylinder', 'Tube', 'Torus', 'Pyramid', 'Teapot', 'Plane'];
const menuItems = [['File', 27.5], ['Edit', 31], ['Tools', 36.5], ['Group', 41], ['Views', 39], ['Create', 45], ['Modifiers', 55], ['reactor', 47.5], ['Animation', 58.5], ['Graph Editors', 76.5], ['Rendering', 61], ['Customize', 61.5], ['MAXScript', 60], ['Help', 30]];
const listItems = ['View', 'Selected', 'Region', 'Crop', 'Blowup', 'Box Selected', 'Region Selected', 'Crop Selected'];

export default function App() {
  return (
    <Root>
      <Global />
      <ZeroDefs>
        <defs>
          {[['bGray', '#e8e8e8', '#777'], ['bYellow', '#fff8a0', '#c8a800'], ['bNavy', '#a0a8c8', '#2c3468'], ['bWhite', '#fff', '#999'], ['bTeal', '#b8e0e4', '#1c6470'], ['bRed', '#f0a0a0', '#c81818'], ['bPale', '#d8d8d8', '#aeaeae'], ['bBall', '#f0f0f0', '#444']].map(([id, a, b]) => (
            <radialGradient key={id} id={id} cx=".38" cy=".32" r=".75"><stop offset="0" stopColor={a} /><stop offset="1" stopColor={b} /></radialGradient>
          ))}
          <linearGradient id="gDark" x1="1" y1="0" x2="0" y2="1"><stop offset="0" stopColor="#9a9a9a" /><stop offset="1" stopColor="#3a3a3a" /></linearGradient>
          <linearGradient id="gSlate" x1="0" y1="0" x2="0" y2="1"><stop offset="0" stopColor="#777" /><stop offset="1" stopColor="#a0a0b4" /></linearGradient>
        </defs>
      </ZeroDefs>
      <Menu>{menuItems.map(([t, w]) => <MenuItem key={t} $w={w}>{t}</MenuItem>)}</Menu>
      <Toolbar><ToolRow /></Toolbar>
      <Work>
        <LeftCol>
          <Side>{sideItems.map(([h, icon], i) => <SideSlot key={i} $h={h}>{icon}</SideSlot>)}</Side>
        </LeftCol>
        <Center>
          <Views>
            <Viewport label="Top" kind="top" />
            <Viewport label="Front" kind="front" />
            <Viewport label="Left" kind="left" />
            <Viewport label="Perspective" kind="persp" active />
          </Views>
          <Slider>
            <SliderBtn>&lt;</SliderBtn>
            <SliderThumb>0 / 100</SliderThumb>
            <SliderBtn>&gt;</SliderBtn>
          </Slider>
          <Ruler>
            <RulerIcon><I w={17} h={16}>
              <rect x=".5" y=".5" width="16" height="4" fill="#ddd" stroke="#111" /><path d="M3 2.500c3-2 4 2 6 0s3 0 5 0" fill="none" stroke="#111" />
              <path d="M4 12V7M2 9l2-2 2 2M13 7V12M11 10l2 2 2-2" fill="none" stroke="#111" />
              <rect x=".5" y="13" width="16" height="2.500" fill="#777" stroke="#111" />
            </I></RulerIcon>
            <RulerLabels>{ruled(21, i => <RulerLabel key={i}>{i * 5}</RulerLabel>)}</RulerLabels>
            <Ticks width="1056" height="24">
              {ruled(101, i => {
                const x = Math.round(54 + 9.49 * i) + .5;
                return <path key={i} d={`M${x} 1V${i % 5 === 0 ? 23 : 11}`} stroke="#7a7a7a" />;
              })}
              <rect x="50.500" y="1.500" width="8" height="23" fill="#6f95c4" fillOpacity=".75" stroke="#7f8c9c" />
            </Ticks>
          </Ruler>
        </Center>
        <Panel>
          <Tabs>
            <Tab $w={29} $active><I w={22} h={20}>
              <path d="M6 0L7.500 5 12 3 9 8 13 9 8 10 7 15 5 10 0 9 4 7 1 3 5 5Z" fill="#f4efb0" stroke="#d8d090" strokeWidth=".5" />
              <Arrow x={9} y={4} s={.85} fill="#ddd" />
            </I></Tab>
            <Tab $w={33}><I w={20} h={20}>
              <path d="M3 20C3 9 9 3 20 3M7 20C7 12 12 7 20 7M11 20C11 15 15 11 20 11" fill="none" stroke="#5868a0" strokeWidth="2.200" />
              <path d="M0 0h3M17 19h3" stroke="#333" />
            </I></Tab>
            <Tab $w={14} $ml={87}><I w={10} h={20}>
              <path d="M0 1H9L7 5H2ZM3 5H6V20H3Z" fill="#7a3c24" stroke="#333" strokeWidth=".5" />
            </I></Tab>
          </Tabs>
          <SubTabs>
            <SubActive><I w={18} h={18}><Ball x={9} y={9} r={8} g="bBall" /></I></SubActive>
            <Slot $w={8} />
            <I w={18} h={20}>
              <rect x="0" y="6" width="12" height="10" fill="#ddd" stroke="#777" /><path d="M8 8L13 1 17 8Z" fill="#888" />
              <circle cx="10" cy="12" r="4.500" fill="#fff" stroke="#333" /><circle cx="10" cy="12" r="1" fill="#333" />
            </I>
            <SubEnd><I w={14} h={14}><circle cx="7" cy="7" r="3.500" fill="none" stroke="#222" strokeWidth="2.500" /><path d="M7 0V14M0 7H14M2 2L12 12M12 2L2 12" stroke="#222" strokeWidth="1.200" /></I></SubEnd>
          </SubTabs>
          <PanelCombo $w={162} $h={22}><span>Standard Primitives</span><ComboBtn /></PanelCombo>
          <Frame>
            <Rollout>
              <RollHead $h={16}><i>-</i>Object Type</RollHead>
              <RollBody $pt={10} $h={133}>
                <AutoGridRow><Check />AutoGrid</AutoGridRow>
                <PrimGrid>{primitives.map(t => <PrimBtn key={t}>{t}</PrimBtn>)}</PrimGrid>
              </RollBody>
            </Rollout>
            <Rollout>
              <RollHead $h={15}><i>-</i>Name and Color</RollHead>
              <RollBody $pt={15} $h={43}>
                <NameRow><NameInput /><Swatch /></NameRow>
              </RollBody>
            </Rollout>
          </Frame>
        </Panel>
      </Work>
      <Status>
        <Prompt><PromptBox $c="#dcc0c0" /><PromptBox $c="#fff" /></Prompt>
        <Divider />
        <StatusMid>
          <StatusRow $h={22}>
            <TextBox $w={174}>None Selected</TextBox>
            <Slot $w={28}><I w={10} h={14}><path d="M2 6V4A3 3 0 0 1 8 4V6" fill="none" stroke="#999" strokeWidth="1.400" /><rect y="6" width="10" height="8" fill="#8e8e8e" /><path d="M0 8.500h10M0 11h10" stroke="#ccc" /></I></Slot>
            <AbsBtn><I w={10} h={10}><circle cx="5" cy="5" r="2" fill="none" stroke="#111" /><path d="M5 0V3M5 7V10M0 5H3M7 5H10" stroke="#111" /></I></AbsBtn>
            <AxisLabel $w={18}>X:</AxisLabel><CoordInput />
            <AxisLabel $w={26}>Y:</AxisLabel><CoordInput />
            <AxisLabel $w={26}>Z:</AxisLabel><CoordInput />
            <TextBox $w={99} $ml={15}>Grid = 10,0m</TextBox>
          </StatusRow>
          <StatusRow $h={22}>
            <TextBox $w={428}>Click or click-and-drag to select objects</TextBox>
            <CubeBtn><I w={16} h={17}>
              <path d="M8 .5L15 4V13L8 16.500 1 13V4Z" fill="#fff" stroke="#111" />
              <path d="M1 4L8 8 15 4M8 8V16.500" fill="none" stroke="#111" /><path d="M4.500 2.500L11.500 6M11.500 2.500L4.500 6M4.500 6V14.500M11.500 6V14.500" stroke="#888" strokeWidth=".6" />
            </I></CubeBtn>
            <Slot $w={22}><Sat /></Slot>
            <TextBox $w={99} $ml={2}>Add Time Tag</TextBox>
          </StatusRow>
        </StatusMid>
        <KeyBtn><I w={24} h={12}>
          <circle cx="5" cy="6" r="3.800" fill="none" stroke="#111" strokeWidth="2.200" />
          <path d="M9 4.500H24V7.500H22V11H19V7.500H17V10H15V7.500H9Z" fill="#111" />
        </I></KeyBtn>
        <KeyCol><KeyCell>Auto Key</KeyCell><KeyCell>Set Key</KeyCell></KeyCol>
        <SetCol>
          <Combo $w={113} $h={21}><span>Selected</span><ComboBtn /></Combo>
          <SetRow>
            <Slot $w={26}><I w={18} h={16}>
              <path d="M0 14H4L8 2 12 13 17 2" fill="none" stroke="#d02828" />
              <path d="M0 4H18M0 14H18" stroke="#8888d8" strokeWidth=".8" strokeDasharray="2 1" /><Fly x={15} y={18} />
            </I></Slot>
            <KeyFilters>Key Filters...</KeyFilters>
          </SetRow>
        </SetCol>
        <Play>
          <PlayRow>
            <Slot $w={24}><Pb d="M1 1h2.500v10H1zM9 1v10L3.500 6zM16 1v10L10 6z" /></Slot>
            <Sep $w={4} $h={16} />
            <Slot $w={22}><Pb w={14} d="M7 1v10L1 6zM8 1h2v10H8zM11 1h2v10h-2z" /></Slot>
            <Slot $w={22}><I w={16} h={16}><rect x="1" y="1" width="14" height="14" fill="none" stroke="#000" strokeWidth="2" /><path d="M5 3.500V12.500L12 8Z" fill="#111" /><Fly x={14} y={19} /></I></Slot>
            <Slot $w={22}><Pb w={14} d="M1 1h2v10H1zM4 1h2v10H4zM7 1v10l6-5z" /></Slot>
            <Sep $w={6} $h={16} />
            <Slot $w={22}><Pb d="M2 1v10L8 6zM8.500 1v10L14.500 6zM15 1h2.500v10H15z" /></Slot>
            <Sep $w={8} $h={16} />
            <Slot $w={16}><I w={16} h={18}><circle cx="6.500" cy="6.500" r="5" fill="#dde" stroke="#2030a0" strokeWidth="1.300" /><path d="M10 10L15 15" stroke="#2030a0" strokeWidth="2.400" /></I></Slot>
            <Slot $w={32}><I w={20} h={18}>
              <path d="M6.500 .5H19.500V13H9M13 .5V13M6.500 6.500H19.500" fill="none" stroke="#801818" /><circle cx="5" cy="12" r="4" fill="#dde" stroke="#2030a0" /><path d="M8 15l3 3" stroke="#2030a0" strokeWidth="2" /><Fly x={15} y={20} />
            </I></Slot>
            <Slot $w={14}><I w={18} h={18}>
              <rect x="4" y="4" width="10" height="10" fill="#e8f0ff" stroke="#2030a0" /><path d="M4 4L8 1H17V10L14 14M14 4L17 1" fill="none" stroke="#2030a0" /><path d="M0 4V0H4M14 18H18V14M0 14V18H4" fill="none" stroke="#111" /><Fly x={15} y={20} />
            </I></Slot>
            <Slot $w={34}><I w={20} h={18}>
              <path d="M6.500 .5H19.500V13H9M13 .5V13M6.500 6.500H19.500" fill="none" stroke="#801818" /><rect x=".5" y="8" width="9" height="9" fill="#e8f0ff" stroke="#2030a0" /><Fly x={15} y={20} />
            </I></Slot>
          </PlayRow>
          <PlayRow>
            <Slot $w={24}><Pb w={14} h={10} d="M1 1h2v8H1zM8 1v8L3.500 5zM6.500 5L11 1v8zM11 1h2v8h-2z" /></Slot>
            <Slot $w={4} />
            <FrameInput>0</FrameInput>
            <Spin><I w={10} h={20}><path d="M5 3l3 4H2zM5 17l3-4H2z" fill="#111" /><path d="M0 10H10" stroke="#888" /><rect x=".5" y=".5" width="9" height="19" fill="none" stroke="#ddd" /></I></Spin>
            <Slot $w={23}><I w={14} h={14}><rect x=".5" y=".5" width="11" height="11" fill="none" stroke="#222" /><path d="M0 3H12" stroke="#222" /><circle cx="9" cy="9" r="4.500" fill="#ddd" stroke="#a02020" /><path d="M9 6.500V9H11" stroke="#222" fill="none" /></I></Slot>
            <Sep $w={6} $h={18} />
            <Slot $w={16}><I w={16} h={16}><path d="M1 1L15 8 1 15Z" fill="#c0c0c0" stroke="#000" strokeWidth="1.400" /><path d="M3 4h4M3 7h7M3 10h5" stroke="#888" strokeDasharray="1 1" /><Fly x={14} y={19} /></I></Slot>
            <Slot $w={32}><I w={16} h={17}>
              <path d="M3 9V4C3 2 5 2 5 4V8M5 3V1.500C5 0 8 0 8 1.500V8M8 2C8 .5 11 .5 11 2V8M11 3.500C11 2 14 2 14 3.500V10C14 14 12 16 8 16 5 16 3 14 1 10 0 8 2 7 3 9Z" fill="#fff" stroke="#111" />
              <Fly x={15} y={19} />
            </I></Slot>
            <Slot $w={14}><I w={18} h={18}>
              <ellipse cx="9" cy="9" rx="5.500" ry="5.500" fill="#f4e020" stroke="#111" /><path d="M9 0V18M0 9H18" stroke="#111" /><path d="M9 0l-2 3h4zM18 9l-3-2v4zM0 9l3-2v4zM9 18l-2-3h4z" fill="#2030a0" /><Fly x={15} y={20} />
            </I></Slot>
            <Slot $w={34}><I w={18} h={18}>
              <rect x=".5" y=".5" width="13" height="13" fill="#dde" stroke="#2030a0" /><path d="M13 5H17.500V17.500H5V13" fill="none" stroke="#111" /><path d="M3 3L10 10M3 3h3M3 3v3M10 10H7M10 10V7" stroke="#111" fill="none" />
            </I></Slot>
          </PlayRow>
        </Play>
      </Status>
      <ListMenu>{listItems.map((t, i) => <ListItem key={t} $on={i === 0}>{t}</ListItem>)}</ListMenu>
      <HeavyFrame />
      <LightFrame />
    </Root>
  );
}
